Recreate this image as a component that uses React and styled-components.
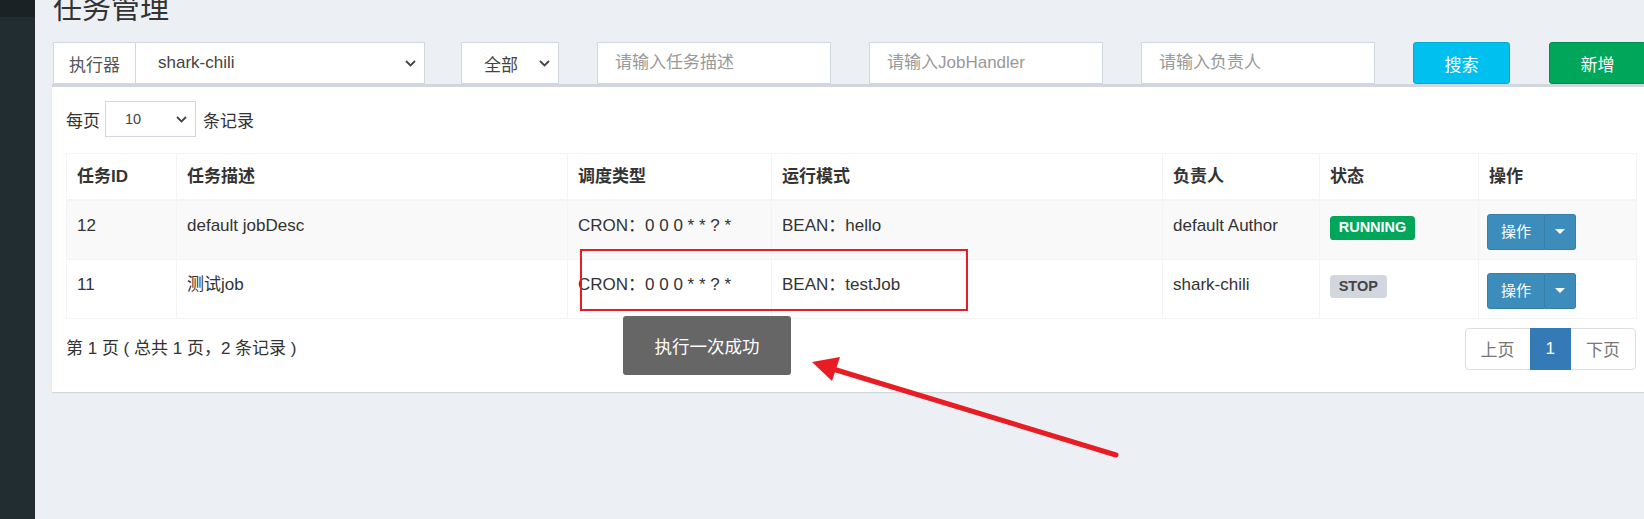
import React from "react";
import styled, { createGlobalStyle, css } from "styled-components";

const GlobalStyle = createGlobalStyle`
  html, body {
    margin: 0;
    padding: 0;
    background: #ecf0f5;
  }
  body {
    font-family: "Liberation Sans", "Noto Sans CJK SC", sans-serif;
    font-size: 17px;
    color: #333;
  }
  * {
    box-sizing: border-box;
  }
`;

const jobs = [
  {
    id: 12,
    desc: "default jobDesc",
    cron: "CRON：0 0 0 * * ? *",
    mode: "BEAN：hello",
    author: "default Author",
    status: "RUNNING",
  },
  {
    id: 11,
    desc: "测试job",
    cron: "CRON：0 0 0 * * ? *",
    mode: "BEAN：testJob",
    author: "shark-chili",
    status: "STOP",
  },
];

const columns = [
  { title: "任务ID", width: 110 },
  { title: "任务描述", width: 391 },
  { title: "调度类型", width: 204 },
  { title: "运行模式", width: 391 },
  { title: "负责人", width: 157 },
  { title: "状态", width: 159 },
  { title: "操作", width: 158 },
];

function Chevron() {
  return (
    <svg width="11" height="7" viewBox="0 0 11 7">
      <polyline
        points="1,1 5.5,5.5 10,1"
        fill="none"
        stroke="#444"
        strokeWidth="1.8"
      />
    </svg>
  );
}

export default function App() {
  return (
    <>
      <GlobalStyle />
      <Page>
        <Sidebar>
          <SidebarTop />
        </Sidebar>
        <Main>
          <Title>任务管理</Title>
          <FilterRow>
            <Cell>
              <InputGroup>
                <Addon>执行器</Addon>
                <FakeSelect $pl={22} $joined>
                  <span>shark-chili</span>
                  <Chevron />
                </FakeSelect>
              </InputGroup>
            </Cell>
            <Cell>
              <FakeSelect $pl={22}>
                <span>全部</span>
                <Chevron />
              </FakeSelect>
            </Cell>
            <Cell>
              <TextInput placeholder="请输入任务描述" />
            </Cell>
            <Cell>
              <TextInput placeholder="请输入JobHandler" />
            </Cell>
            <Cell>
              <TextInput placeholder="请输入负责人" />
            </Cell>
            <Cell>
              <ActionButton $kind="info">搜索</ActionButton>
            </Cell>
            <Cell>
              <ActionButton $kind="success">新增</ActionButton>
            </Cell>
          </FilterRow>

          <Box>
            <LengthRow>
              <span>每页</span>
              <SmallSelect>
                <span>10</span>
                <Chevron />
              </SmallSelect>
              <span>条记录</span>
            </LengthRow>

            <Table>
              <colgroup>
                {columns.map((c) => (
                  <col key={c.title} style={{ width: c.width }} />
                ))}
              </colgroup>
              <thead>
                <tr>
                  {columns.map((c) => (
                    <Th key={c.title}>{c.title}</Th>
                  ))}
                </tr>
              </thead>
              <tbody>
                {jobs.map((job, i) => (
                  <Tr key={job.id} $striped={i % 2 === 0}>
                    <Td>{job.id}</Td>
                    <Td>{job.desc}</Td>
                    <Td>{job.cron}</Td>
                    <Td>{job.mode}</Td>
                    <Td>{job.author}</Td>
                    <Td>
                      <StatusLabel $running={job.status === "RUNNING"}>
                        {job.status}
                      </StatusLabel>
                    </Td>
                    <Td>
                      <BtnGroup>
                        <OpButton>操作</OpButton>
                        <CaretButton>
                          <svg width="10" height="5" viewBox="0 0 10 5">
                            <polygon points="0,0 10,0 5,5" fill="#fff" />
                          </svg>
                        </CaretButton>
                      </BtnGroup>
                    </Td>
                  </Tr>
                ))}
              </tbody>
            </Table>

            <Footer>
              <FooterText>第 1 页 ( 总共 1 页，2 条记录 )</FooterText>
              <Pagination>
                <PageItem>上页</PageItem>
                <PageItem $active>1</PageItem>
                <PageItem>下页</PageItem>
              </Pagination>
            </Footer>
          </Box>
        </Main>

        <Toast>执行一次成功</Toast>

        <Annotation width="1644" height="519" viewBox="0 0 1644 519">
          <rect
            x="581"
            y="250"
            width="386"
            height="60"
            fill="none"
            stroke="#e81c24"
            strokeWidth="2"
          />
          <line
            x1="1116"
            y1="455"
            x2="833"
            y2="369"
            stroke="#e81c24"
            strokeWidth="5"
            strokeLinecap="round"
          />
          <polygon points="812,362 840,357 832,381" fill="#e81c24" />
        </Annotation>
      </Page>
    </>
  );
}

const Page = styled.div`
  position: relative;
  display: flex;
  width: 1644px;
  height: 519px;
  overflow: hidden;
  background: #ecf0f5;
`;

const Sidebar = styled.aside`
  flex: 0 0 35px;
  display: flex;
  flex-direction: column;
  background: #222d32;
`;

const SidebarTop = styled.div`
  height: 17px;
  background: #1a2226;
`;

const Main = styled.main`
  flex: 0 0 auto;
  padding-left: 17px;
`;

const Title = styled.h1`
  margin: -6px 0 0 1px;
  height: 30px;
  font-size: 29px;
  line-height: 30px;
  font-weight: 400;
  color: #333;
`;

const FilterRow = styled.div`
  display: grid;
  grid-template-columns: 408px 136px 272px 272px 272px 136px 136px;
  height: 42px;
  margin: 18px 0 0 1px;
`;

const Cell = styled.div`
  width: calc(100% - 38px);
  height: 100%;
`;

const InputGroup = styled.div`
  display: flex;
  width: 372px;
  height: 100%;
`;

const Addon = styled.div`
  flex: 0 0 83px;
  display: flex;
  align-items: center;
  justify-content: center;
  border: 1px solid #d2d6de;
  background: #fff;
  color: #555;
`;

const FakeSelect = styled.div`
  flex: 1;
  display: flex;
  align-items: center;
  justify-content: space-between;
  height: 100%;
  padding: 0 8px 0 ${(p) => p.$pl}px;
  border: 1px solid #d2d6de;
  ${(p) =>
    p.$joined &&
    css`
      border-left: none;
    `}
  background: #fff;
  color: #444;
`;

const TextInput = styled.input`
  width: 100%;
  height: 100%;
  padding: 0 17px;
  border: 1px solid #d2d6de;
  background: #fff;
  font: inherit;
  color: #555;
  outline: none;
  &::placeholder {
    color: #999;
  }
`;

const ActionButton = styled.button`
  width: 97px;
  height: 100%;
  border-radius: 3px;
  font: inherit;
  color: #fff;
  ${(p) =>
    p.$kind === "info"
      ? css`
          background: #00c0ef;
          border: 1px solid #00acd6;
        `
      : css`
          background: #00a65a;
          border: 1px solid #008d4c;
        `}
`;

const Box = styled.section`
  width: 1598px;
  background: #fff;
  border-top: 3px solid #d2d6de;
  padding: 14px 14px 22px;
  box-shadow: 0 1px 1px rgba(0, 0, 0, 0.1);
`;

const LengthRow = styled.div`
  display: flex;
  align-items: center;
  gap: 5px;
  height: 36px;
`;

const SmallSelect = styled.div`
  display: flex;
  align-items: center;
  justify-content: space-between;
  width: 91px;
  height: 36px;
  padding: 0 8px 0 19px;
  border: 1px solid #d2d6de;
  font-size: 14.5px;
  color: #444;
  margin-right: 2px;
`;

const Table = styled.table`
  width: 1570px;
  margin-top: 16px;
  border-collapse: collapse;
  table-layout: fixed;
  border: 1px solid #f4f4f4;
`;

const cellStyles = css`
  line-height: 24px;
  text-align: left;
  vertical-align: top;
  border: 1px solid #f4f4f4;
  white-space: nowrap;
`;

const Th = styled.th`
  ${cellStyles}
  padding: 10.5px 10px;
  border-bottom-width: 2px;
  font-weight: bold;
  color: #333;
`;

const Tr = styled.tr`
  background: ${(p) => (p.$striped ? "#f9f9f9" : "#fff")};
`;

const Td = styled.td`
  ${cellStyles}
  padding: 12.6px 10px 9.4px;
  color: #333;
`;

const StatusLabel = styled.span`
  display: inline-block;
  margin-top: 2px;
  padding: 0.3em 0.6em 0.35em;
  font-size: 14.5px;
  font-weight: bold;
  line-height: 1;
  border-radius: 0.25em;
  vertical-align: top;
  ${(p) =>
    p.$running
      ? css`
          background: #00a65a;
          color: #fff;
        `
      : css`
          background: #d2d6de;
          color: #444;
        `}
`;

const BtnGroup = styled.div`
  display: flex;
  width: max-content;
  height: 36px;
  margin-left: -2px;
`;

const OpButton = styled.div`
  display: flex;
  align-items: center;
  justify-content: center;
  width: 58px;
  background: #3c8dbc;
  border: 1px solid #367fa9;
  border-radius: 3px 0 0 3px;
  color: #fff;
  font-size: 15px;
`;

const CaretButton = styled.div`
  display: flex;
  align-items: center;
  justify-content: center;
  width: 31px;
  background: #3c8dbc;
  border: 1px solid #367fa9;
  border-left: none;
  border-radius: 0 3px 3px 0;
`;

const Footer = styled.div`
  display: flex;
  align-items: center;
  justify-content: space-between;
  margin-top: 9px;
  width: 1570px;
`;

const FooterText = styled.span`
  margin-bottom: 4px;
`;

const Pagination = styled.div`
  display: flex;
  height: 42px;
`;

const PageItem = styled.div`
  display: flex;
  align-items: center;
  padding: 0 15px;
  margin-left: -1px;
  border: 1px solid #ddd;
  color: #777;
  background: #fff;
  &:first-child {
    margin-left: 0;
    border-radius: 4px 0 0 4px;
  }
  &:last-child {
    border-radius: 0 4px 4px 0;
  }
  ${(p) =>
    p.$active &&
    css`
      background: #337ab7;
      border-color: #337ab7;
      color: #fff;
      position: relative;
      z-index: 1;
    `}
`;

const Toast = styled.div`
  position: absolute;
  left: 623px;
  top: 316px;
  width: 168px;
  height: 59px;
  display: flex;
  align-items: center;
  justify-content: center;
  background: #666;
  color: #fff;
  font-size: 17.5px;
  border-radius: 3px;
`;

const Annotation = styled.svg`
  position: absolute;
  left: 0;
  top: 0;
  pointer-events: none;
`;
